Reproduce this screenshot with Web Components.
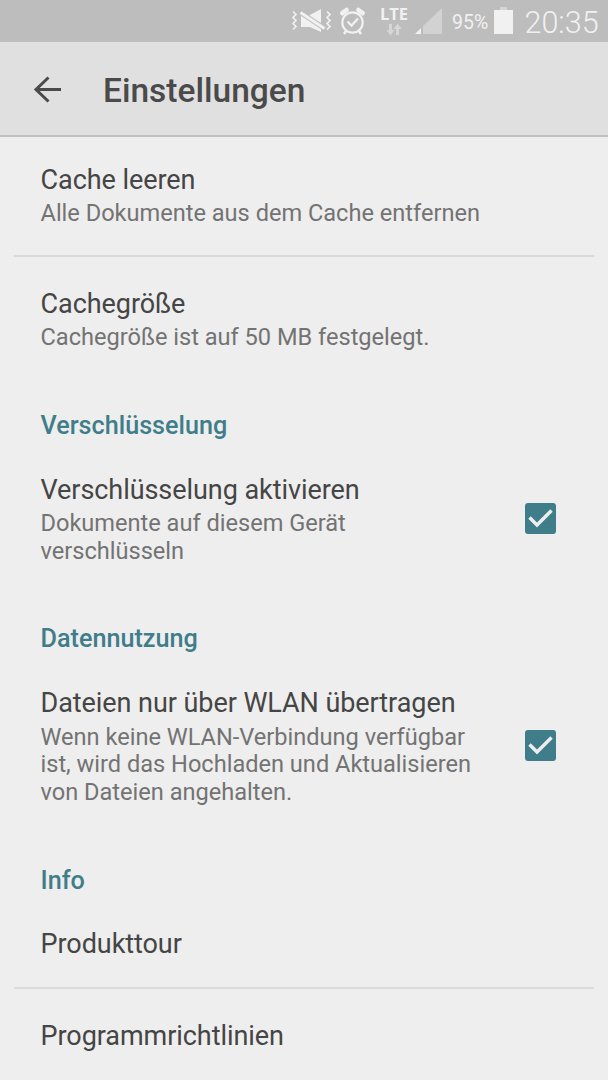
<!DOCTYPE html>
<html lang="de">
<head>
<meta charset="utf-8">
<meta name="viewport" content="width=device-width, initial-scale=1">
<title>Einstellungen</title>
<style>
  html, body {
    margin: 0;
    height: 100%;
    overflow: hidden;
    background: #eeeeee;
    font-family: Roboto, sans-serif;
  }
</style>
</head>
<body>
<settings-screen></settings-screen>

<script>
"use strict";
function defineElement(name, html, setup) {
  const template = document.createElement('template');
  template.innerHTML = html;
  window.customElements.define(name, class extends HTMLElement {
    constructor() {
      super();
      this.attachShadow({ mode: 'open' });
      this.shadowRoot.appendChild(template.content.cloneNode(true));
    }
    connectedCallback() {
      if (setup) {
        setup(this);
      }
    }
  });
}

defineElement('status-bar', `
<style>
  :host {
    display: flex;
    align-items: flex-start;
    box-sizing: border-box;
    height: 42px;
    flex: none;
    background: #bdbdbd;
    color: #f1f1f1;
    padding-left: 291px;
  }
  svg { display: block; flex: none; }
  .network {
    display: flex;
    flex-direction: column;
    align-items: center;
    width: 30px;
    margin-left: 13px;
  }
  .lte {
    font: bold 16.5px/17px "Open Sans", sans-serif;
    margin-top: 5px;
  }
  .network svg { margin-top: 1px; }
  .percent {
    font-size: 19.5px;
    line-height: 22px;
    margin: 12px 0 0 10px;
    width: 38px;
    white-space: nowrap;
  }
  .time {
    font-size: 30.5px;
    font-weight: 300;
    line-height: 36px;
    margin: 5px 0 0 11.5px;
    white-space: nowrap;
  }
</style>
<svg width="42" height="42" viewBox="0 0 42 42">
  <path d="M2 11.500l3 3-3 3 3 3-3 3 3 3-3 3M36 11.500l3 3-3 3 3 3-3 3 3 3-3 3" fill="none" stroke="#f1f1f1" stroke-width="1.700"/>
  <path d="M10 15.500v11.500h9L30 32V9L18 15.500z" fill="#f1f1f1"/>
  <path d="M7.500 11.200l27 18" stroke="#bdbdbd" stroke-width="5"/>
  <path d="M9.500 12.500l24 16" stroke="#f1f1f1" stroke-width="3"/>
</svg>
<svg width="40" height="42" viewBox="0 0 40 42" style="margin-left:-1px;margin-right:-6px">
  <g fill="none" stroke="#f1f1f1">
    <circle cx="20.500" cy="22.500" r="10.200" stroke-width="2.200"/>
    <path d="M15.500 21.500l4 4 6.500-7" stroke-width="2.300"/>
    <path d="M14 31l-2 3M27 31l2 3" stroke-width="2.500"/>
    <path d="M10.300 13.200l4.300-3.200M26.400 10l4.300 3.200" stroke-width="4.600" stroke-linecap="round"/>
  </g>
</svg>
<div class="network">
  <span class="lte">LTE</span>
  <svg width="16" height="13" viewBox="0 0 16 13">
    <path d="M3 1h3v6h2.500l-4 5.500L.500 7H3zM10 12V6H7.500l4-5.500 4 5.500H13v6z" fill="#d6d6d6"/>
  </svg>
</div>
<svg width="28" height="42" viewBox="0 0 28 42" style="margin-left:5px">
  <path d="M28 8v26H9V26z" fill="#d2d2d2"/>
  <path d="M7 28v6H1z" fill="#f1f1f1"/>
</svg>
<span class="percent">95%</span>
<svg width="19" height="42" viewBox="0 0 19 42" style="margin-left:4px">
  <path d="M6 7h7v4H6z" fill="#d5d5d5"/>
  <path d="M0 10h19v24H0z" fill="#f1f1f1"/>
</svg>
<span class="time">20:35</span>
`);

defineElement('app-bar', `
<style>
  :host {
    display: flex;
    align-items: center;
    box-sizing: border-box;
    height: 95px;
    flex: none;
    padding: 4px 0 2px 33px;
    background: #e0e0e0;
    border-bottom: 2px solid #bfbfbf;
    color: #4a4a4a;
  }
  button {
    appearance: none;
    background: transparent;
    border: none;
    padding: 0;
    width: 70px;
    cursor: pointer;
  }
  svg { display: block; }
  h1 {
    margin: 3px 0 0;
    font-size: 33.500px;
    font-weight: 500;
    line-height: 40px;
  }
</style>
<button aria-label="Zurück">
  <svg width="30" height="28" viewBox="0 0 30 28">
    <path d="M28 13.500H4M15.500 1.500L3 13.500l12.500 12" fill="none" stroke="#4a4a4a" stroke-width="3"/>
  </svg>
</button>
<h1><slot></slot></h1>
`);

defineElement('settings-category', `
<style>
  :host {
    display: block;
    padding: 32px 40.500px 1.600px;
    color: #3f7d8a;
    font-size: 25.200px;
    font-weight: 500;
    line-height: 30px;
  }
</style>
<slot></slot>
`);

defineElement('check-box', `
<style>
  :host {
    display: block;
    width: 31px;
    height: 31px;
    margin-bottom: 3px;
    cursor: pointer;
  }
  svg { display: block; }
  :host(:not([checked])) path { display: none; }
</style>
<svg width="31" height="31" viewBox="0 0 31 31">
  <rect width="31" height="31" rx="3" fill="#3f7d8a"/>
  <path d="M4.500 14.500l7.500 7.500L26.500 7.500" fill="none" stroke="#eeeeee" stroke-width="3.400"/>
</svg>
`, host => {
  host.onclick = () => host.toggleAttribute('checked');
});

defineElement('settings-item', `
<style>
  :host {
    display: flex;
    align-items: center;
    justify-content: space-between;
    margin: 0 14px;
    padding: 31px 38px 26.800px 26.500px;
  }
  :host([divider]) { border-bottom: 2px solid #dadada; }
  .text { width: 445px; }
  .title {
    color: #454545;
    font-size: 27px;
    letter-spacing: -0.060px;
    line-height: 32px;
  }
  ::slotted([slot="summary"]) {
    display: block;
    margin-top: 4.700px;
    color: #737373;
    font-size: 23.600px;
    letter-spacing: -0.010px;
    line-height: 27.700px;
  }
</style>
<div class="text">
  <div class="title"><slot></slot></div>
  <slot name="summary"></slot>
</div>
<slot name="control"></slot>
`);

defineElement('settings-screen', `
<style>
  :host {
    display: flex;
    flex-direction: column;
    height: 100vh;
    overflow: hidden;
  }
  main {
    flex: 1;
    min-height: 0;
    overflow: hidden;
  }
  .first { padding-top: 26.600px; }
</style>
<status-bar></status-bar>
<app-bar>Einstellungen</app-bar>
<main>
  <settings-item class="first" divider>Cache leeren<span slot="summary">Alle Dokumente aus dem Cache entfernen</span></settings-item>
  <settings-item>Cachegröße<span slot="summary">Cachegröße ist auf 50 MB festgelegt.</span></settings-item>
  <settings-category>Verschlüsselung</settings-category>
  <settings-item>Verschlüsselung aktivieren<span slot="summary">Dokumente auf diesem Gerät verschlüsseln</span><check-box slot="control" checked></check-box></settings-item>
  <settings-category>Datennutzung</settings-category>
  <settings-item>Dateien nur über WLAN übertragen<span slot="summary">Wenn keine WLAN-Verbindung verfügbar ist, wird das Hochladen und Aktualisieren von Dateien angehalten.</span><check-box slot="control" checked></check-box></settings-item>
  <settings-category>Info</settings-category>
  <settings-item divider>Produkttour</settings-item>
  <settings-item>Programmrichtlinien</settings-item>
</main>
`);
</script>
</body>
</html>
